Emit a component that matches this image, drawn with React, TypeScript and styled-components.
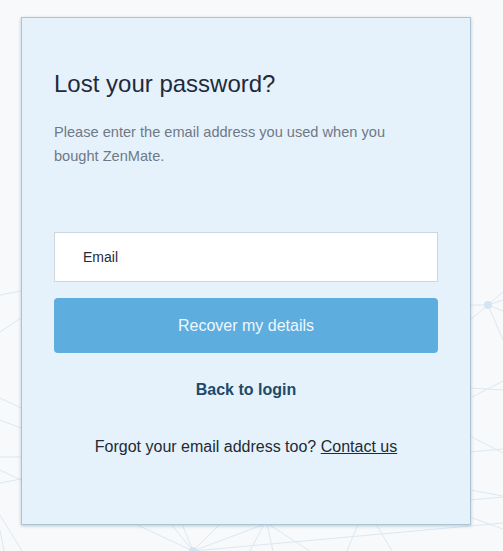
import React from "react";
import styled, { createGlobalStyle } from "styled-components";

const GlobalStyle = createGlobalStyle`
  html, body {
    margin: 0;
    padding: 0;
    background: #f7f9fb;
  }
  body {
    font-family: "Liberation Sans", Arial, sans-serif;
  }
`;

const Page = styled.div`
  position: relative;
  width: 503px;
  height: 551px;
  overflow: hidden;
  padding: 17px 0 0 21px;
  box-sizing: border-box;
`;

const Backdrop = styled.svg`
  position: absolute;
  left: 0;
  top: 0;
  width: 503px;
  height: 551px;
  z-index: 0;
`;

const Card = styled.div`
  position: relative;
  z-index: 1;
  width: 450px;
  height: 508px;
  box-sizing: border-box;
  background: #e6f2fb;
  border: 1px solid #a9c5d6;
  box-shadow: 0 1px 3px rgba(110, 140, 160, 0.45);
  padding: 52px 32px 0 32px;
  display: flex;
  flex-direction: column;
`;

const Title = styled.h2`
  margin: 0;
  font-size: 24px;
  line-height: 28px;
  font-weight: 400;
  color: #1f2a3d;
`;

const Intro = styled.p`
  margin: 22px 0 0 0;
  max-width: 345px;
  font-size: 14.6px;
  line-height: 24px;
  color: #6e7987;
`;

const EmailInput = styled.input`
  margin-top: 64px;
  height: 50px;
  box-sizing: border-box;
  border: 1px solid #ccd6de;
  background: #ffffff;
  padding: 0 0 0 28px;
  font-family: "Liberation Sans", Arial, sans-serif;
  font-size: 14px;
  color: #1f2a3d;
  outline: none;
  &::placeholder {
    color: #1f2a3d;
  }
`;

const SubmitButton = styled.button`
  margin-top: 16px;
  height: 55px;
  border: none;
  border-radius: 4px;
  background: #5daddf;
  color: #eef8fd;
  font-family: "Liberation Sans", Arial, sans-serif;
  font-size: 16px;
  cursor: pointer;
`;

const BackLink = styled.a`
  margin-top: 27px;
  align-self: center;
  font-size: 16px;
  line-height: 20px;
  font-weight: 700;
  color: #1b4a6b;
  text-decoration: none;
`;

const Footer = styled.p`
  margin: 37px 0 0 0;
  text-align: center;
  font-size: 16px;
  line-height: 20px;
  color: #222a33;
`;

const FooterLink = styled.a`
  color: #222a33;
  text-decoration: underline;
`;

const lines: [number, number, number, number][] = [
  [0, 295, 21, 291],
  [0, 332, 21, 318],
  [0, 398, 21, 408],
  [0, 420, 21, 428],
  [0, 457, 21, 457],
  [0, 470, 21, 480],
  [0, 483, 21, 479],
  [0, 515, 22, 551],
  [0, 530, 4, 551],
  [488, 305, 503, 292],
  [488, 305, 503, 300],
  [488, 305, 503, 311],
  [488, 305, 470, 320],
  [488, 305, 503, 340],
  [470, 305, 488, 305],
  [470, 388, 503, 390],
  [470, 398, 503, 381],
  [470, 436, 503, 453],
  [470, 452, 503, 449],
  [470, 490, 503, 496],
  [470, 500, 503, 497],
  [470, 517, 503, 529],
  [135, 524, 193, 551],
  [171, 524, 193, 551],
  [182, 524, 193, 551],
  [220, 524, 193, 551],
  [265, 524, 193, 551],
  [193, 551, 503, 523],
  [264, 524, 250, 551],
  [267, 524, 273, 551],
  [268, 524, 310, 551],
  [358, 524, 347, 551],
  [376, 524, 392, 551],
];

export default function App() {
  return (
    <>
      <GlobalStyle />
      <Page>
        <Backdrop viewBox="0 0 503 551">
          {lines.map(([x1, y1, x2, y2], i) => (
            <line key={i} x1={x1} y1={y1} x2={x2} y2={y2} stroke="#dbe8f2" strokeWidth="1" />
          ))}
          <circle cx="488" cy="305" r="4" fill="#d3e5f1" />
          <circle cx="193" cy="551" r="4" fill="#d3e5f1" />
        </Backdrop>
        <Card>
          <Title>Lost your password?</Title>
          <Intro>
            Please enter the email address you used when you bought ZenMate.
          </Intro>
          <EmailInput type="email" placeholder="Email" />
          <SubmitButton type="button">Recover my details</SubmitButton>
          <BackLink href="#">Back to login</BackLink>
          <Footer>
            Forgot your email address too? <FooterLink href="#">Contact us</FooterLink>
          </Footer>
        </Card>
      </Page>
    </>
  );
}
